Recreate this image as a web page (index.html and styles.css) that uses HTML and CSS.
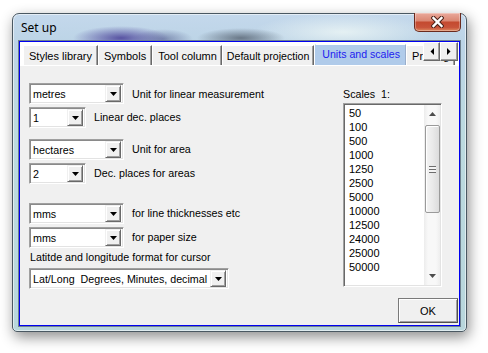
FILE: index.html
```html
<!DOCTYPE html>
<html>
<head>
<meta charset="utf-8">
<title>Set up</title>
<link rel="stylesheet" href="styles.css">
</head>
<body>
<div class="window">
  <div class="titlebar">
    <span class="title">Set up</span>
    <div class="close">
      <svg width="13" height="12" viewBox="0 0 13 12"><path d="M2.5 2 L10.5 10 M10.5 2 L2.5 10" stroke="#4a2218" stroke-width="4.4" stroke-linecap="square"/><path d="M2.5 2 L10.5 10 M10.5 2 L2.5 10" stroke="#fff" stroke-width="2.4" stroke-linecap="square"/></svg>
    </div>
  </div>
  <div class="client">
    <div class="tabstrip">
      <div class="tab">Styles library</div>
      <div class="tab">Symbols</div>
      <div class="tab">Tool column</div>
      <div class="tab">Default projection</div>
      <div class="tab active">Units and scales</div>
      <div class="tab">Printing</div>
      <div class="tabscroll">
        <div class="sbtn"><svg width="4" height="7" viewBox="0 0 4 7"><path d="M4 0 V7 L0.5 3.5 Z" fill="#000"/></svg></div>
        <div class="sbtn"><svg width="4" height="7" viewBox="0 0 4 7"><path d="M0 0 V7 L3.5 3.5 Z" fill="#000"/></svg></div>
      </div>
    </div>
    <div class="panel">
      <div class="left">
        <div class="row">
          <div class="combo w95"><span class="val">metres</span><span class="dd"><svg width="7" height="4" viewBox="0 0 7 4"><path d="M0 0 H7 L3.5 4 Z" fill="#000"/></svg></span></div>
          <span class="lbl lbl-low">Unit for linear measurement</span>
        </div>
        <div class="row r-tight">
          <div class="combo w57"><span class="val">1</span><span class="dd"><svg width="7" height="4" viewBox="0 0 7 4"><path d="M0 0 H7 L3.5 4 Z" fill="#000"/></svg></span></div>
          <span class="lbl">Linear dec. places</span>
        </div>
        <div class="row r-group">
          <div class="combo w95"><span class="val">hectares</span><span class="dd"><svg width="7" height="4" viewBox="0 0 7 4"><path d="M0 0 H7 L3.5 4 Z" fill="#000"/></svg></span></div>
          <span class="lbl">Unit for area</span>
        </div>
        <div class="row r-tight">
          <div class="combo w57"><span class="val">2</span><span class="dd"><svg width="7" height="4" viewBox="0 0 7 4"><path d="M0 0 H7 L3.5 4 Z" fill="#000"/></svg></span></div>
          <span class="lbl">Dec. places for areas</span>
        </div>
        <div class="row r-big">
          <div class="combo w95"><span class="val">mms</span><span class="dd"><svg width="7" height="4" viewBox="0 0 7 4"><path d="M0 0 H7 L3.5 4 Z" fill="#000"/></svg></span></div>
          <span class="lbl">for line thicknesses etc</span>
        </div>
        <div class="row r-tight">
          <div class="combo w95"><span class="val">mms</span><span class="dd"><svg width="7" height="4" viewBox="0 0 7 4"><path d="M0 0 H7 L3.5 4 Z" fill="#000"/></svg></span></div>
          <span class="lbl">for paper size</span>
        </div>
        <div class="caption">Latitde and longitude format for cursor</div>
        <div class="row r-cap">
          <div class="combo w200"><span class="val">Lat/Long  Degrees, Minutes, decimal</span><span class="dd"><svg width="7" height="4" viewBox="0 0 7 4"><path d="M0 0 H7 L3.5 4 Z" fill="#000"/></svg></span></div>
        </div>
      </div>
      <div class="scales">
        <div class="scales-lbl">Scales  1:</div>
        <div class="listbox">
          <ul class="items">
            <li>50</li><li>100</li><li>500</li><li>1000</li><li>1250</li><li>2500</li>
            <li>5000</li><li>10000</li><li>12500</li><li>24000</li><li>25000</li><li>50000</li>
          </ul>
          <div class="vscroll">
            <div class="arrow"><svg width="7" height="4" viewBox="0 0 7 4"><path d="M0 4 H7 L3.5 0 Z" fill="#4d4d4d"/></svg></div>
            <div class="track">
              <div class="thumb"><span class="grip"></span></div>
            </div>
            <div class="arrow"><svg width="7" height="4" viewBox="0 0 7 4"><path d="M0 0 H7 L3.5 4 Z" fill="#4d4d4d"/></svg></div>
          </div>
        </div>
      </div>
    </div>
    <div class="footer">
      <div class="okbtn">OK</div>
    </div>
  </div>
</div>
</body>
</html>
```

FILE: styles.css
```css
* { box-sizing: border-box; }
html, body { margin: 0; padding: 0; background: #fff; }
body {
  width: 488px;
  height: 353px;
  overflow: hidden;
  font-family: "Liberation Sans", Arial, sans-serif;
  font-size: 10.7px;
  color: #000;
}

.window {
  position: relative;
  width: 455px;
  height: 319px;
  margin: 13px 0 0 12px;
  border: 1px solid #4a5862;
  border-radius: 7px 7px 5px 5px;
  padding: 0 6px 5px;
  display: flex;
  flex-direction: column;
  background:
    radial-gradient(ellipse 48px 12px at 108px 24px, rgba(70, 60, 150, .85), rgba(70, 60, 150, 0)),
    radial-gradient(ellipse 30px 10px at 150px 25px, rgba(80, 90, 140, .6), rgba(80, 90, 140, 0)),
    radial-gradient(ellipse 44px 10px at 228px 24px, rgba(70, 80, 95, .7), rgba(70, 80, 95, 0)),
    radial-gradient(ellipse 90px 18px at 330px 18px, rgba(235, 245, 245, .85), rgba(235, 245, 245, 0)),
    linear-gradient(180deg, #c4d8ec 0, #bcd4e6 28px, #bcdadf 120px, #b8d6dc 100%);
  box-shadow: inset 0 0 0 1px rgba(255, 255, 255, .55), 2px 5px 14px rgba(0, 0, 0, .45);
}

.titlebar {
  position: relative;
  height: 27px;
  display: flex;
  align-items: center;
  padding: 0 0 1px 2px;
}
.title {
  font-family: "Noto Sans", "Open Sans", sans-serif;
  font-size: 12px;
  color: #000;
}
.close {
  position: absolute;
  top: -1px;
  right: -1px;
  width: 47px;
  height: 19px;
  border: 1px solid #6a2a1e;
  border-top: none;
  border-radius: 0 0 5px 5px;
  display: flex;
  align-items: center;
  justify-content: center;
  background: linear-gradient(180deg, #eaa99b 0%, #db8874 42%, #c44a30 52%, #c8533a 80%, #de8a60 100%);
  box-shadow: inset 0 0 0 1px rgba(255, 255, 255, .3);
}

.client {
  flex: 1;
  display: flex;
  flex-direction: column;
  border: 1px solid #0000f0;
  box-shadow: 0 0 0 1px #6f8290;
  background: #f0f0f0;
}

.tabstrip {
  position: relative;
  height: 23px;
  padding: 3px 0 0 3px;
  display: flex;
  align-items: flex-end;
  overflow: hidden;
  background: #fff;
  white-space: nowrap;
}
.tab {
  flex: none;
  height: 20px;
  padding: 0 5px;
  display: flex;
  align-items: center;
  font-size: 11px;
  background: #f0f0f0;
  border-left: 1px solid #fff;
  border-top: 1px solid #fff;
  border-right: 1px solid #696969;
  box-shadow: inset -1px 0 #a0a0a0;
}
.tab:nth-child(3) { padding: 0 4px 0 5px; }
.tab:nth-child(4) { font-size: 10.6px; padding: 0 4px; }
.tab.active {
  height: 21px;
  margin-top: -1px;
  margin-left: 1px;
  padding: 0 5px 3px 6px;
  font-size: 10.6px;
  background: #b0cbea;
  color: #1c1cf0;
  box-shadow: none;
  border-left-color: #b0cbea;
  border-right-color: #9aaecb;
}
.tabscroll {
  position: absolute;
  top: 0;
  right: 1px;
  display: flex;
}
.sbtn {
  width: 17px;
  height: 19px;
  display: flex;
  align-items: center;
  justify-content: center;
  background: #f0f0f0;
  border: 1px solid;
  border-color: #fff #696969 #696969 #fff;
  box-shadow: inset -1px -1px #a0a0a0;
}
.sbtn + .sbtn { width: 18px; }

.panel {
  flex: 1;
  border-top: 1px solid #fff;
  display: grid;
  grid-template-columns: 314px 99px;
  align-items: start;
  padding: 17px 0 0 9px;
}

.row {
  display: flex;
  align-items: center;
  gap: 8px;
}
.r-tight { margin-top: 3px; }
.r-group { margin-top: 11px; }
.r-big { margin-top: 19px; }
.r-cap { margin-top: 4px; }
.lbl { line-height: 13px; }
.lbl-low { padding-top: 2px; }
.caption {
  margin-top: 3px;
  line-height: 13px;
  padding-left: 1px;
}

.combo {
  position: relative;
  height: 21px;
  display: flex;
  align-items: center;
  background: #fff;
  border: 1px solid;
  border-color: #a0a0a0 #fff #fff #a0a0a0;
  box-shadow: inset 1px 1px #8a8a8a, inset -1px -1px #e3e3e3;
  padding: 0 2px 0 3px;
}
.w95 { width: 95px; }
.w57 { width: 57px; }
.w200 { width: 200px; }
.val {
  flex: 1;
  min-width: 0;
  white-space: pre;
  overflow: hidden;
}
.dd {
  flex: none;
  width: 16px;
  height: 17px;
  display: flex;
  align-items: center;
  justify-content: center;
  background: #f0f0f0;
  border: 1px solid;
  border-color: #f0f0f0 #696969 #696969 #f0f0f0;
  box-shadow: inset 1px 1px #fff, inset -1px -1px #a0a0a0;
}

.scales { padding-top: 5px; }
.scales-lbl { line-height: 12px; white-space: pre; }
.listbox {
  margin-top: 3px;
  height: 184px;
  display: flex;
  background: #fff;
  border: 1px solid;
  border-color: #a0a0a0 #fff #fff #a0a0a0;
  box-shadow: inset 1px 1px #696969, inset -1px -1px #e3e3e3;
  padding: 1px;
}
.items {
  flex: 1;
  list-style: none;
  margin: 0;
  padding: 1px 0 0 4px;
  font-size: 11px;
}
.items li {
  height: 14px;
  line-height: 14px;
}
.vscroll {
  flex: none;
  width: 16px;
  display: flex;
  flex-direction: column;
  background: linear-gradient(90deg, #ececec, #f8f8f8 25%, #f8f8f8 75%, #eeeeee);
}
.arrow {
  height: 18px;
  display: flex;
  align-items: center;
  justify-content: center;
  padding-left: 1px;
}
.track {
  flex: 1;
  padding: 2px 0 0 1px;
}
.thumb {
  height: 88px;
  border: 1px solid #9a9a9a;
  border-radius: 2px;
  background: linear-gradient(90deg, #f4f4f4, #eaeaea 50%, #dcdcdc);
  box-shadow: inset 1px 1px #fff;
  display: flex;
  align-items: center;
  justify-content: center;
}
.grip {
  width: 7px;
  height: 7px;
  background: repeating-linear-gradient(180deg, #6d6d6d 0 1px, #f4f4f4 1px 3px);
}

.footer {
  display: flex;
  justify-content: flex-end;
  padding: 0 1px 2px 0;
}
.okbtn {
  width: 60px;
  height: 25px;
  display: flex;
  align-items: center;
  justify-content: center;
  font-size: 11px;
  background: #f0f0f0;
  border: 1px solid;
  border-color: #7a7a7a #505050 #505050 #7a7a7a;
  box-shadow: inset 1px 1px #fff, inset -1px -1px #a0a0a0;
}
```
